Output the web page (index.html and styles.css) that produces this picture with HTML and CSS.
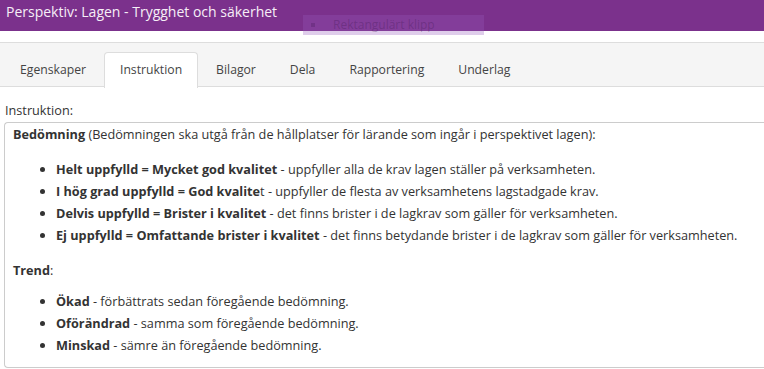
FILE: index.html
```html
<!DOCTYPE html>
<html lang="sv">
<head>
  <meta charset="UTF-8">
  <title>Perspektiv: Lagen - Trygghet och säkerhet</title>
  <link rel="stylesheet" href="styles.css">
</head>
<body>
  <!-- Rubrik -->
  <div class="titlebar">Perspektiv: Lagen - Trygghet och säkerhet</div>
  <div class="snip"><span class="snip-dot"></span>Rektangulärt klipp</div>

  <!-- Flikar -->
  <div class="tabbar">
    <ul class="tabs">
      <li>Egenskaper</li>
      <li class="active">Instruktion</li>
      <li>Bilagor</li>
      <li>Dela</li>
      <li>Rapportering</li>
      <li>Underlag</li>
    </ul>
  </div>

  <div class="field-label">Instruktion:</div>
  <div class="instruction">
    <p><strong>Bedömning</strong> (Bedömningen ska utgå från de hållplatser för lärande som ingår i perspektivet lagen):</p>
    <ul>
      <li><strong>Helt uppfylld = Mycket god kvalitet</strong> - uppfyller alla de krav lagen ställer på verksamheten.</li>
      <li><strong>I hög grad uppfylld = God kvalite</strong>t - uppfyller de flesta av verksamhetens lagstadgade krav.</li>
      <li><strong>Delvis uppfylld = Brister i kvalitet</strong> - det finns brister i de lagkrav som gäller för verksamheten.</li>
      <li><strong>Ej uppfylld = Omfattande brister i kvalitet</strong> - det finns betydande brister i de lagkrav som gäller för verksamheten.</li>
    </ul>
    <p class="trend"><strong>Trend</strong>:</p>
    <ul>
      <li><strong>Ökad</strong> - förbättrats sedan föregående bedömning.</li>
      <li><strong>Oförändrad</strong> - samma som föregående bedömning.</li>
      <li><strong>Minskad</strong> - sämre än föregående bedömning.</li>
    </ul>
  </div>
</body>
</html>
```

FILE: styles.css
```css
body {
  margin: 0;
  font-family: "Open Sans", sans-serif;
  font-size: 12.7px;
  color: #333;
  background: #fff;
  overflow: hidden;
}
.titlebar {
  background: #7b318c;
  color: #f6eef7;
  height: 31px;
  line-height: 24px;
  padding-left: 6px;
  font-size: 14px;
}
/* klippverktygets ruta ovanpå */
.snip {
  position: absolute;
  left: 303px;
  top: 15px;
  width: 181px;
  height: 20px;
  background: rgba(150, 90, 190, 0.3);
  color: rgba(60, 20, 80, 0.3);
  font-size: 12px;
  line-height: 20px;
  box-sizing: border-box;
  padding-left: 30px;
}
.snip-dot {
  position: absolute;
  left: 8px;
  top: 8px;
  width: 4px;
  height: 4px;
  background: rgba(60, 20, 80, 0.25);
}
.tabbar {
  margin-top: 11px;
  background: #f5f5f5;
  border-top: 1px solid #ddd;
  border-bottom: 1px solid #ddd;
  height: 43px;
}
.tabs {
  list-style: none;
  margin: 0;
  padding: 9px 0 0 4px;
  display: flex;
}
.tabs li {
  padding: 0 15px;
  height: 34px;
  line-height: 34px;
  margin-right: 2px;
  font-size: 12.2px;
  border: 1px solid transparent;
  border-bottom: none;
  border-radius: 4px 4px 0 0;
  color: #444;
}
.tabs li.active {
  background: #fff;
  border-color: #ddd;
  height: 35px;
}
.field-label {
  margin: 14px 0 3px 5px;
  color: #333;
}
.instruction {
  margin-left: 4px;
  border: 1px solid #ccc;
  border-right: none;
  border-radius: 4px 0 0 4px;
  padding: 0 8px 6px;
  height: 238px;
}
.instruction p {
  margin: 0 0 13px;
  line-height: 22px;
}
.instruction p.trend {
  margin-bottom: 9px;
}
.instruction ul {
  margin: 0 0 13px;
  padding-left: 43px;
}
.instruction li {
  line-height: 22px;
}
.instruction ul:last-child {
  margin-bottom: 0;
}
```
